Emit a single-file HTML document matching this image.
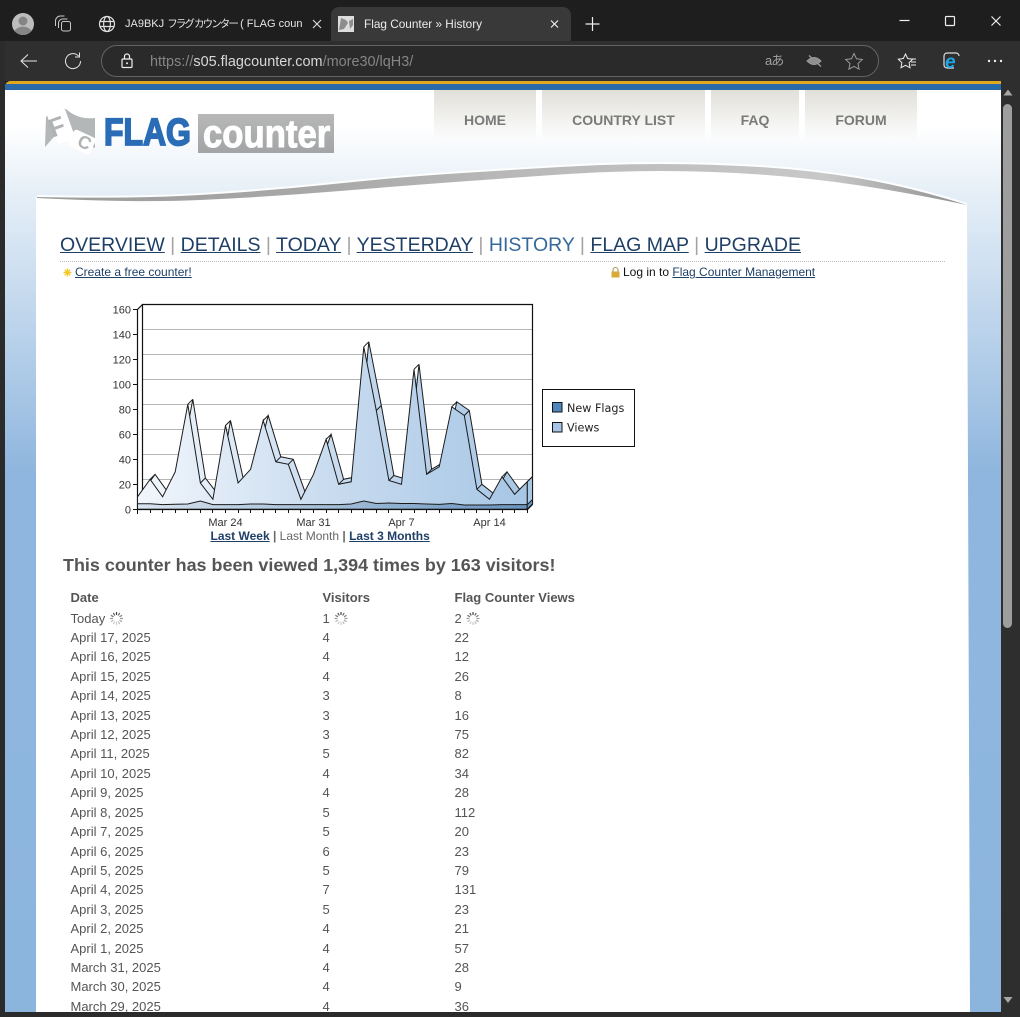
<!DOCTYPE html>
<html lang="en"><head><meta charset="utf-8"><title>Flag Counter » History</title>
<style>
html,body{margin:0;padding:0;width:1020px;height:1017px;overflow:hidden;background:#1e1e1e}
body{position:relative;font-family:"Liberation Sans",Arial,sans-serif}
.a{position:absolute;white-space:nowrap}
a{color:#1f3f66;text-decoration:underline}
svg{position:absolute;overflow:visible}
.r{position:absolute;font-size:13px;line-height:16px;color:#555;white-space:nowrap;margin-top:1px}
.tab{position:absolute;top:90px;height:52px;background:linear-gradient(#e0dfd9,rgba(238,238,234,.15) 90%,rgba(255,255,255,0));color:#7a7a7a;font-weight:bold;font-size:14px;text-align:center;line-height:61px}
</style></head><body>
<!-- chrome -->
<div class="a" style="left:0;top:0;width:1020px;height:41px;background:#1e1e1e"></div>
<div class="a" style="left:0;top:41px;width:1020px;height:40px;background:#2f2f2f"></div>
<div class="a" style="left:331px;top:7px;width:240px;height:34px;background:#393939;border-radius:8px 8px 0 0"></div>
<div class="a" style="left:101px;top:45px;width:776px;height:30px;border:1px solid #636363;border-radius:16px;background:#2a2a2a"></div>

<svg style="left:0;top:0" width="1020" height="81" viewBox="0 0 1020 81" fill="none">
<circle cx="23" cy="24" r="11" fill="#bdbdbd"/><circle cx="23" cy="21" r="4.500" fill="#858585"/><path d="M14.500 31a9 6.500 0 0 1 17 0a11 11 0 0 1-17 0z" fill="#858585"/>
<g stroke="#c8c8c8" stroke-width="1"><rect x="61.500" y="21.500" width="9" height="9.500" rx="2"/><path d="M58.500 28V23a4 4 0 0 1 4-4h5M55.500 26v-5a5 5 0 0 1 5-5h4"/></g>
<g stroke="#e0e0e0" stroke-width="1.200"><circle cx="107" cy="24" r="7.500"/><ellipse cx="107" cy="24" rx="3.400" ry="7.500"/><path d="M99.800 21.500h14.400M99.800 26.500h14.400"/></g>
<path d="M313 20l8 8M321 20l-8 8" stroke="#d8d8d8" stroke-width="1.200"/>
<rect x="338" y="16" width="16" height="16" fill="#ddd"/><path d="M339 30l2-12 5 2 2 3-4 6zM349 21l4-2v6l-3 4z" fill="#8d8d8d"/>
<path d="M551 20.500l7 7M558 20.500l-7 7" stroke="#eee" stroke-width="1.200"/>
<path d="M592.500 17v14M585.500 24h14" stroke="#eee" stroke-width="1.200"/>
<path d="M899.500 20.500h10" stroke="#eee" stroke-width="1.200"/>
<rect x="945.500" y="16.500" width="9" height="9" rx="1" stroke="#eee" stroke-width="1.200"/>
<path d="M991.500 16.500l9 9M1000.500 16.500l-9 9" stroke="#eee" stroke-width="1.200"/>
<path d="M37 61H21.500M28 54.500l-7 6.500 7 6.500" stroke="#e6e6e6" stroke-width="1"/>
<path d="M78.500 56a7.500 7.500 0 1 0 2 5M79.500 52.500v4.500h-4.500" stroke="#e6e6e6" stroke-width="1"/>
<rect x="122" y="59" width="10" height="8.500" rx="1" stroke="#eee" stroke-width="1.200"/><path d="M124.500 59v-2.500a2.500 2.500 0 0 1 5 0V59" stroke="#eee" stroke-width="1.200"/><circle cx="127" cy="63.200" r="1" fill="#eee"/>
<path d="M809 55.500l12 11" stroke="#9a9a9a" stroke-width="1.400"/><path d="M807 61q7-7 14 0q-7 7-14 0z" fill="#8f8f8f" stroke="#9a9a9a"/>
<path d="M854 53.500l2.500 5.300 5.800.7-4.300 4 1.100 5.700-5.100-2.800-5.100 2.800 1.100-5.700-4.300-4 5.800-.7z" stroke="#9a9a9a" stroke-width="1"/>
<path d="M905.500 54l2.200 4.500 5 .7-3.600 3.500.9 5-4.500-2.400-4.500 2.400.9-5-3.600-3.500 5-.7z" stroke="#eee" stroke-width="1"/><path d="M911 62h5M911 65h5M912 59h4" stroke="#eee" stroke-width=".9"/>
<path d="M954 68h-7a3 3 0 0 1-3-3v-9a3 3 0 0 1 3-3h9a3 3 0 0 1 3 3" stroke="#ddd" stroke-width="1.200"/>
<text x="945" y="68" font-family="Liberation Sans" font-weight="bold" font-style="italic" font-size="19" fill="#1ea7e8">e</text>
<circle cx="989" cy="61" r="1.200" fill="#eee"/><circle cx="995" cy="61" r="1.200" fill="#eee"/><circle cx="1001" cy="61" r="1.200" fill="#eee"/>
</svg>
<div class="a" style="left:125px;top:17px;width:178px;overflow:hidden;font:11px/15px 'Liberation Sans','Noto Sans CJK JP',sans-serif;color:#e4e4e4">JA9BKJ <span style="font-size:10.500px;letter-spacing:-1.900px">フラグ カウンター</span>  ( FLAG coun</div>
<div class="a" style="left:364px;top:17px;font-size:11.800px;line-height:15px;color:#ececec">Flag Counter » History</div>
<div class="a" style="left:150px;top:54px;font-size:14.450px;line-height:16px;color:#858585">https://<span style="color:#d8d8d8">s05.flagcounter.com</span>/more30/lqH3/</div>
<div class="a" style="left:765px;top:53px;font:13px/16px 'Liberation Sans','Noto Sans CJK JP',sans-serif;color:#a0a0a0;letter-spacing:-1px">aあ</div>

<!-- viewport -->
<div class="a" style="left:5px;top:81px;width:996px;height:931px;overflow:hidden;border-radius:6px 0 0 0;background:linear-gradient(#fff 0,#fff 45px,#e6eff7 110px,#c9dcef 205px,#8fb6de 390px,#8cb5de 931px)">
<div class="a" style="left:0;top:0;width:996px;height:3px;background:#e0a81e"></div>
<div class="a" style="left:0;top:3px;width:996px;height:6px;background:#2a6aa9"></div>
</div>
<!-- swoosh and white body -->
<svg style="left:0;top:0" width="1020" height="1017" viewBox="0 0 1020 1017">
<defs>
<linearGradient id="sw" x1="36" x2="967" y1="0" y2="0" gradientUnits="userSpaceOnUse"><stop offset="0" stop-color="#9c9c9c"/><stop offset=".3" stop-color="#a8a8a8"/><stop offset=".5" stop-color="#b8b8b8"/><stop offset=".85" stop-color="#c8c8c8"/><stop offset="1" stop-color="#8f8f8f"/></linearGradient>
</defs>
<path d="M36 197Q133 199 200 195Q267 191 333.500 184Q400 177 455 173.500Q510 170 560 167Q610 164 660 164Q710 164 760 167Q810 170 860 178.500Q910 187 967 205L970 1012H36z" fill="#fff"/>
<path d="M37 197Q133 199 200 195Q267 191 333.500 184Q400 177 455 173.500Q510 170 560 167Q610 164 660 164Q710 164 760 167Q810 170 860 178.500Q910 187 967 205" fill="none" stroke="#fff" stroke-width="4" opacity=".85"/>
<path d="M37 197Q133 199 200 195Q267 191 333.500 184Q400 177 455 173.500Q510 170 560 167Q610 164 660 164Q710 164 760 167Q810 170 860 178.500Q910 187 967 205Q910 193 860 185.500Q810 178 760 174.500Q710 171 660 171Q610 171 560 174.500Q510 178 455 182Q400 186 333.500 191.500Q267 197 200 200Q133 203 37 198z" fill="url(#sw)"/>
</svg>
<!-- menu -->
<div class="tab" style="left:434px;width:102px">HOME</div>
<div class="tab" style="left:542px;width:163px">COUNTRY LIST</div>
<div class="tab" style="left:711px;width:88px">FAQ</div>
<div class="tab" style="left:805px;width:112px">FORUM</div>
<!-- logo -->
<svg style="left:30px;top:100px" width="80" height="60" viewBox="0 0 80 60">
<path d="M15 47L16 17Q25 9 36 9Q48 20 65 18L65 48L40 38L30 30z" fill="#b4b7b8"/>
<rect x="21.500" y="10" width="19" height="32" rx="3" fill="#fff" transform="rotate(-20 31 26)"/>
<rect x="40" y="33" width="24" height="18" rx="3" fill="#fff" transform="rotate(25 52 42)"/>
<text transform="translate(27 36) rotate(-20)" font-family="Liberation Sans" font-weight="bold" font-size="26" fill="#b0b3b4" text-anchor="middle" x="3">F</text>
<text transform="translate(52 48) rotate(25)" font-family="Liberation Sans" font-weight="bold" font-size="18" fill="#b0b3b4" text-anchor="middle">C</text>
</svg>
<div class="a" style="left:104px;top:111px;font-weight:bold;font-size:38px;line-height:45px;transform:scaleX(.84);transform-origin:0 0;-webkit-text-stroke:1.800px #2a6cb5;color:#2a6cb5">FLAG</div>
<div class="a" style="left:198px;top:114px;width:136px;height:39px;background:linear-gradient(#b8b8b8,#a2a4a5)"></div>
<div class="a" style="left:203px;top:111.500px;font-weight:bold;font-size:39px;line-height:45px;transform:scaleX(.89);transform-origin:0 0;color:#fff;-webkit-text-stroke:1px #fff">counter</div>
<!-- nav -->
<div class="a" style="left:60px;top:233px;font-size:19.500px;line-height:24px;color:#a3a3a3"><a href="#">OVERVIEW</a> | <a href="#">DETAILS</a> | <a href="#">TODAY</a> | <a href="#">YESTERDAY</a> | <span style="color:#37699b">HISTORY</span> | <a href="#">FLAG MAP</a> | <a href="#">UPGRADE</a></div>
<div class="a" style="left:60px;top:261px;width:885px;border-top:1px dotted #bbb"></div>
<svg style="left:62px;top:267px" width="12" height="12" viewBox="0 0 12 12"><path d="M5.500 1.500v8M1.500 5.500h8M2.700 2.700l5.600 5.600M8.300 2.700l-5.600 5.600" stroke="#f2c522" stroke-width="1.300"/></svg>
<div class="a" style="left:75px;top:265px;font-size:12px;line-height:15px"><a href="#">Create a free counter!</a></div>
<svg style="left:611px;top:267px" width="9" height="11" viewBox="0 0 9 11"><rect x=".5" y="4.500" width="8" height="6" fill="#d9a93a"/><path d="M2 4.500V3a2.500 2.500 0 0 1 5 0v1.500" fill="none" stroke="#a8965a" stroke-width="1.100"/></svg>
<div class="a" style="left:623px;top:265px;font-size:12px;line-height:15px;color:#111">Log in to <a href="#">Flag Counter Management</a></div>

<!-- chart -->
<svg style="left:0;top:0" width="1020" height="1017" viewBox="0 0 1020 1017">
<defs>
<linearGradient id="vw" gradientUnits="userSpaceOnUse" x1="137" x2="530" y1="0" y2="0"><stop offset="0" stop-color="#f1f6fc"/><stop offset=".5" stop-color="#c8dbef"/><stop offset="1" stop-color="#a6c6e5"/></linearGradient>
<linearGradient id="nf" gradientUnits="userSpaceOnUse" x1="137" x2="530" y1="0" y2="0"><stop offset="0" stop-color="#d8e3ee"/><stop offset=".5" stop-color="#a2bdd8"/><stop offset="1" stop-color="#6893be"/></linearGradient>
<polygon id="vp" points="137.500,509.300 137.500,496.800 150.100,479.300 162.600,496.800 175.200,471.800 187.800,404.300 200.400,483 212.900,499.300 225.500,425.500 238.100,483 250.600,469.300 263.200,420.500 275.800,461.800 288.300,464.300 300.900,499.300 313.500,474.300 326.100,439.300 338.600,484.300 351.200,481.800 363.800,346.800 376.300,410.500 388.900,480.500 401.500,484.300 414,369.300 426.600,474.300 439.200,466.800 451.800,406.800 464.300,415.500 476.900,489.300 489.500,499.300 502,476.800 514.600,494.300 527.200,481.800 527.200,509.300"/>
</defs>
<g stroke="#b5b5b5" stroke-width="1"><path d="M142 329.500H532M142 354.500H532M142 379.500H532M142 404.500H532M142 429.500H532M142 454.500H532M142 479.500H532"/></g>
<path d="M142.500 504V304.500H532.500V504" fill="none" stroke="#111" stroke-width="1.200"/>
<path d="M137.500 509.500V309.500L142.500 304.500" fill="none" stroke="#111" stroke-width="1.200"/>
<use href="#vp" transform="translate(5 -5)" fill="url(#vw)" stroke="#1a1a1a" stroke-width="1"/>
<path d="M137.500 496.800l5-5M150.100 479.300l5-5M162.600 496.800l5-5M187.800 404.300l5-5M200.400 483l5-5M212.900 499.300l5-5M225.500 425.500l5-5M238.100 483l5-5M263.200 420.500l5-5M275.800 461.800l5-5M288.300 464.300l5-5M300.900 499.300l5-5M326.100 439.300l5-5M338.600 484.300l5-5M351.200 481.800l5-5M363.800 346.800l5-5M376.300 410.500l5-5M388.900 480.500l5-5M401.500 484.300l5-5M414 369.300l5-5M426.600 474.300l5-5M439.200 466.800l5-5M451.800 406.800l5-5M464.300 415.500l5-5M476.900 489.300l5-5M489.500 499.300l5-5M502 476.800l5-5M514.600 494.300l5-5M527.200 481.800l5-5" stroke="#1a1a1a" stroke-width="1"/>
<polygon points="527.200,481.800 532.500,476.800 532.500,504 527.200,509.300" fill="#a8c8e6" stroke="#1a1a1a"/>
<use href="#vp" fill="url(#vw)" stroke="#1a1a1a" stroke-width="1"/>
<polygon points="137.500,509.300 137.500,503.800 150.100,503.800 162.600,504.600 175.200,504.300 187.800,504 200.400,501 212.900,504.600 225.500,504.600 238.100,504.600 250.600,504 263.200,504 275.800,504.600 288.300,504.600 300.900,504.600 313.500,504.600 326.100,504.600 338.600,504.600 351.200,504 363.800,501 376.300,503.500 388.900,503 401.500,503.500 414,503.500 426.600,504 439.200,504.400 451.800,503.500 464.300,505 476.900,505 489.500,505 502,504.600 514.600,504.600 527.200,504.600 527.200,509.300" fill="url(#nf)" stroke="#1a1a1a" stroke-width="1"/>
<polygon points="527.200,504.600 532.500,499.600 532.500,504 527.200,509.300" fill="#6b97c1" stroke="#1a1a1a"/>
<path d="M133 309.500h4.500M133 334.500h4.500M133 359.500h4.500M133 384.500h4.500M133 409.500h4.500M133 434.500h4.500M133 459.500h4.500M133 484.500h4.500M133 509.500h4.500" stroke="#111"/>
<path d="M137.500 509.500H527.500L532.500 504.500" fill="none" stroke="#111" stroke-width="1.200"/>
<path d="M137.500 509v5M150.500 509v4M162.500 509v4M175.500 509v4M187.500 509v4M200.500 509v4M212.500 509v4M225.500 509v4M238.500 509v4M250.500 509v4M263.500 509v4M275.500 509v4M288.500 509v4M300.500 509v4M313.500 509v4M326.500 509v4M338.500 509v4M351.500 509v4M363.500 509v4M376.500 509v4M388.500 509v4M401.500 509v4M414.500 509v4M426.500 509v4M439.500 509v4M451.500 509v4M464.500 509v4M476.500 509v4M489.500 509v4M502.500 509v4M514.500 509v4M527.500 509v4" stroke="#111"/>
<g font-family="Liberation Sans" font-size="11" fill="#333" text-anchor="end"><text x="131" y="313.500">160</text><text x="131" y="338.500">140</text><text x="131" y="363.500">120</text><text x="131" y="388.500">100</text><text x="131" y="413.500">80</text><text x="131" y="438.500">60</text><text x="131" y="463.500">40</text><text x="131" y="488.500">20</text><text x="131" y="513.500">0</text></g>
<g font-family="Liberation Sans" font-size="11" fill="#333" text-anchor="middle"><text x="225.500" y="526">Mar 24</text><text x="313.500" y="526">Mar 31</text><text x="401.500" y="526">Apr 7</text><text x="489.500" y="526">Apr 14</text></g>
<rect x="542.500" y="389.500" width="92" height="57" fill="#fff" stroke="#111"/>
<rect x="552.500" y="402.500" width="9.500" height="9.500" fill="#4f86bb" stroke="#111"/><rect x="552.500" y="422.500" width="9.500" height="9.500" fill="#a6c5e5" stroke="#111"/>
<g font-family="DejaVu Sans" font-size="11.200" fill="#222"><text x="567" y="412">New Flags</text><text x="567" y="431.500">Views</text></g>
</svg>
<div class="a" style="left:210.500px;top:529px;font-size:12px;line-height:15px;color:#666"><a href="#" style="font-weight:bold">Last Week</a> <b>|</b> Last Month <b>|</b> <a href="#" style="font-weight:bold">Last 3 Months</a></div>
<div class="a" style="left:63px;top:555px;font-size:17.960px;line-height:21px;font-weight:bold;color:#555">This counter has been viewed 1,394 times by 163 visitors!</div>

<!-- table -->
<div class="r" style="left:70.500px;top:589px;font-weight:bold">Date</div><div class="r" style="left:322.500px;top:589px;font-weight:bold">Visitors</div><div class="r" style="left:454.500px;top:589px;font-weight:bold">Flag Counter Views</div>
<div class="r" style="left:70.500px;top:610px">Today</div><div class="r" style="left:322.500px;top:610px">1</div><div class="r" style="left:454.500px;top:610px">2</div>
<svg style="left:0;top:0" width="600" height="640" viewBox="0 0 600 640"><defs><g id="sp" stroke-width="1.200"><path d="M0-6.500v3" stroke="#444"/><path d="M3.200-5.600l-1.500 2.600" stroke="#666"/><path d="M5.600-3.200l-2.600 1.500" stroke="#888"/><path d="M6.500 0h-3" stroke="#999"/><path d="M5.600 3.200l-2.600-1.500" stroke="#aaa"/><path d="M3.200 5.600l-1.500-2.600" stroke="#bbb"/><path d="M0 6.500v-3" stroke="#ccc"/><path d="M-3.200 5.600l1.500-2.600" stroke="#ccc"/><path d="M-5.600 3.200l2.600-1.500" stroke="#bbb"/><path d="M-6.500 0h3" stroke="#999"/><path d="M-5.600-3.200l2.600 1.500" stroke="#777"/><path d="M-3.200-5.600l1.500 2.600" stroke="#555"/></g></defs><use href="#sp" x="116.500" y="618.500"/><use href="#sp" x="341" y="618.500"/><use href="#sp" x="473" y="618.500"/></svg>
<div class="r" style="left:70.500px;top:629px">April 17, 2025</div><div class="r" style="left:322.500px;top:629px">4</div><div class="r" style="left:454.500px;top:629px">22</div>
<div class="r" style="left:70.500px;top:648px">April 16, 2025</div><div class="r" style="left:322.500px;top:648px">4</div><div class="r" style="left:454.500px;top:648px">12</div>
<div class="r" style="left:70.500px;top:668px">April 15, 2025</div><div class="r" style="left:322.500px;top:668px">4</div><div class="r" style="left:454.500px;top:668px">26</div>
<div class="r" style="left:70.500px;top:687px">April 14, 2025</div><div class="r" style="left:322.500px;top:687px">3</div><div class="r" style="left:454.500px;top:687px">8</div>
<div class="r" style="left:70.500px;top:707px">April 13, 2025</div><div class="r" style="left:322.500px;top:707px">3</div><div class="r" style="left:454.500px;top:707px">16</div>
<div class="r" style="left:70.500px;top:726px">April 12, 2025</div><div class="r" style="left:322.500px;top:726px">3</div><div class="r" style="left:454.500px;top:726px">75</div>
<div class="r" style="left:70.500px;top:745px">April 11, 2025</div><div class="r" style="left:322.500px;top:745px">5</div><div class="r" style="left:454.500px;top:745px">82</div>
<div class="r" style="left:70.500px;top:765px">April 10, 2025</div><div class="r" style="left:322.500px;top:765px">4</div><div class="r" style="left:454.500px;top:765px">34</div>
<div class="r" style="left:70.500px;top:784px">April 9, 2025</div><div class="r" style="left:322.500px;top:784px">4</div><div class="r" style="left:454.500px;top:784px">28</div>
<div class="r" style="left:70.500px;top:804px">April 8, 2025</div><div class="r" style="left:322.500px;top:804px">5</div><div class="r" style="left:454.500px;top:804px">112</div>
<div class="r" style="left:70.500px;top:823px">April 7, 2025</div><div class="r" style="left:322.500px;top:823px">5</div><div class="r" style="left:454.500px;top:823px">20</div>
<div class="r" style="left:70.500px;top:843px">April 6, 2025</div><div class="r" style="left:322.500px;top:843px">6</div><div class="r" style="left:454.500px;top:843px">23</div>
<div class="r" style="left:70.500px;top:862px">April 5, 2025</div><div class="r" style="left:322.500px;top:862px">5</div><div class="r" style="left:454.500px;top:862px">79</div>
<div class="r" style="left:70.500px;top:881px">April 4, 2025</div><div class="r" style="left:322.500px;top:881px">7</div><div class="r" style="left:454.500px;top:881px">131</div>
<div class="r" style="left:70.500px;top:901px">April 3, 2025</div><div class="r" style="left:322.500px;top:901px">5</div><div class="r" style="left:454.500px;top:901px">23</div>
<div class="r" style="left:70.500px;top:920px">April 2, 2025</div><div class="r" style="left:322.500px;top:920px">4</div><div class="r" style="left:454.500px;top:920px">21</div>
<div class="r" style="left:70.500px;top:940px">April 1, 2025</div><div class="r" style="left:322.500px;top:940px">4</div><div class="r" style="left:454.500px;top:940px">57</div>
<div class="r" style="left:70.500px;top:959px">March 31, 2025</div><div class="r" style="left:322.500px;top:959px">4</div><div class="r" style="left:454.500px;top:959px">28</div>
<div class="r" style="left:70.500px;top:978px">March 30, 2025</div><div class="r" style="left:322.500px;top:978px">4</div><div class="r" style="left:454.500px;top:978px">9</div>
<div class="r" style="left:70.500px;top:998px">March 29, 2025</div><div class="r" style="left:322.500px;top:998px">4</div><div class="r" style="left:454.500px;top:998px">36</div>

<!-- frame + scrollbar -->
<div class="a" style="left:0;top:41px;width:5px;height:976px;background:#2b2b2b"></div>
<div class="a" style="left:0;top:1012px;width:1020px;height:5px;background:#2b2b2b"></div>
<div class="a" style="left:1001px;top:81px;width:19px;height:936px;background:#2e2e2e"></div>
<div class="a" style="left:1003px;top:104px;width:9px;height:524px;border-radius:5px;background:#9e9e9e"></div>
<svg style="left:1001px;top:88px" width="14" height="10" viewBox="0 0 14 10"><path d="M2.500 7.500L7 1.500l4.500 6z" fill="#a6a6a6"/></svg>
<svg style="left:1001px;top:995px" width="14" height="10" viewBox="0 0 14 10"><path d="M2.500 2L7 8l4.500-6z" fill="#a6a6a6"/></svg>
</body></html>
